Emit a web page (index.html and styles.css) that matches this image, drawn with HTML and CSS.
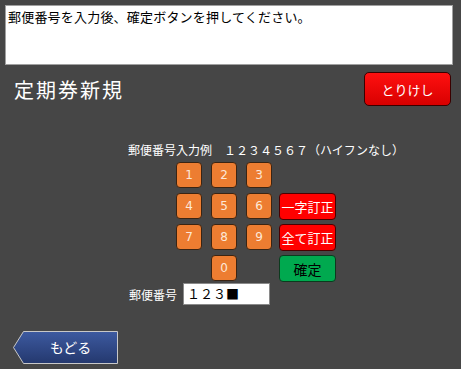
FILE: index.html
```html
<!DOCTYPE html>
<html lang="ja">
<head>
    <meta charset="UTF-8">
    <title>定期券新規</title>
    <link rel="stylesheet" href="styles.css">
</head>
<body>
    <div class="screen">
        <div class="message">郵便番号を入力後、確定ボタンを押してください。</div>

        <div class="header">
            <h1 class="title">定期券新規</h1>
            <button class="cancel-button">とりけし</button>
        </div>

        <p class="example">郵便番号入力例　１２３４５６７（ハイフンなし）</p>

        <div class="keypad">
            <button class="key">1</button>
            <button class="key">2</button>
            <button class="key">3</button>
            <span></span>
            <button class="key">4</button>
            <button class="key">5</button>
            <button class="key">6</button>
            <button class="action red">一字訂正</button>
            <button class="key">7</button>
            <button class="key">8</button>
            <button class="key">9</button>
            <button class="action red">全て訂正</button>
            <span></span>
            <button class="key">0</button>
            <span></span>
            <button class="action green">確定</button>
        </div>

        <div class="zip-row">
            <label class="zip-label">郵便番号</label>
            <div class="zip-input">１２３■</div>
        </div>

        <button class="back-button">
            <svg class="back-shape" width="105" height="33" viewBox="0 0 105 33">
                <defs>
                    <linearGradient id="backGrad" x1="0" y1="0" x2="0" y2="1">
                        <stop offset="0" stop-color="#3d5aa0"/>
                        <stop offset="1" stop-color="#24386e"/>
                    </linearGradient>
                </defs>
                <polygon points="10.5,0.5 104.5,0.5 104.5,32.5 10.5,32.5 0.5,16.5" fill="url(#backGrad)" stroke="#c8c8c8" stroke-width="1"/>
            </svg>
            <span class="back-text">もどる</span>
        </button>
    </div>
</body>
</html>
```

FILE: styles.css
```css
body {
    margin: 0;
    padding: 0;
    background-color: #464646;
    font-family: "Noto Sans CJK JP", "DejaVu Sans", sans-serif;
}
.screen {
    width: 461px;
    height: 369px;
    overflow: hidden;
}
.message {
    margin: 5px 8px 0 5px;
    padding: 3px 2px 0 2px;
    background-color: #fff;
    border: 1px solid #a0a0a0;
    box-sizing: border-box;
    height: 60px;
    font-size: 13px;
    line-height: 16px;
    letter-spacing: 0.2px;
    color: #000;
}
.header {
    display: flex;
    justify-content: space-between;
    align-items: center;
    margin-top: 7px;
    padding: 0 10px 0 14px;
    height: 34px;
}
.title {
    margin: 0;
    font-size: 20px;
    font-weight: normal;
    color: #fff;
    letter-spacing: 2px;
}
.cancel-button {
    width: 87px;
    height: 34px;
    background: linear-gradient(#ff1010, #d80000);
    border: 1px solid #3a0000;
    border-radius: 5px;
    color: #fff;
    font-family: inherit;
    font-size: 13px;
    padding: 0;
}
.example {
    margin: 36px 0 0 128px;
    font-size: 12px;
    line-height: 16px;
    color: #fff;
    white-space: nowrap;
}
.keypad {
    display: grid;
    grid-template-columns: 26px 26px 26px 57px;
    grid-auto-rows: 26px;
    column-gap: 9px;
    row-gap: 5px;
    margin: 4px 0 0 176px;
}
.key {
    width: 26px;
    height: 26px;
    padding: 0;
    background-color: #ed7d31;
    border: 1px solid #3b2412;
    border-radius: 4px;
    color: #fde8d8;
    font-family: "DejaVu Sans", sans-serif;
    font-size: 12px;
}
.action {
    margin-left: -2px;
    width: 57px;
    height: 27px;
    padding: 0;
    border-radius: 4px;
    font-family: inherit;
    font-size: 13px;
}
.red {
    background-color: #ff0000;
    border: 1px solid #4a0000;
    color: #fff;
}
.green {
    background-color: #00a94f;
    border: 1px solid #0c3a1e;
    color: #000;
    font-size: 14px;
}
.zip-row {
    display: flex;
    align-items: center;
    gap: 6px;
    margin: 2px 0 0 129px;
}
.zip-label {
    color: #fff;
    font-size: 12px;
}
.zip-input {
    width: 87px;
    height: 22px;
    box-sizing: border-box;
    background-color: #fff;
    border: 1px solid #8a8a8a;
    padding-left: 3px;
    font-size: 13px;
    line-height: 20px;
    color: #000;
}
.back-button {
    position: relative;
    display: block;
    width: 105px;
    height: 33px;
    margin: 26px 0 0 13px;
    padding: 0;
    background: none;
    border: none;
}
.back-shape {
    position: absolute;
    left: 0;
    top: 0;
}
.back-text {
    position: relative;
    display: block;
    padding-left: 10px;
    color: #fff;
    font-family: "Noto Sans CJK JP", sans-serif;
    font-size: 14px;
    line-height: 33px;
}
```
